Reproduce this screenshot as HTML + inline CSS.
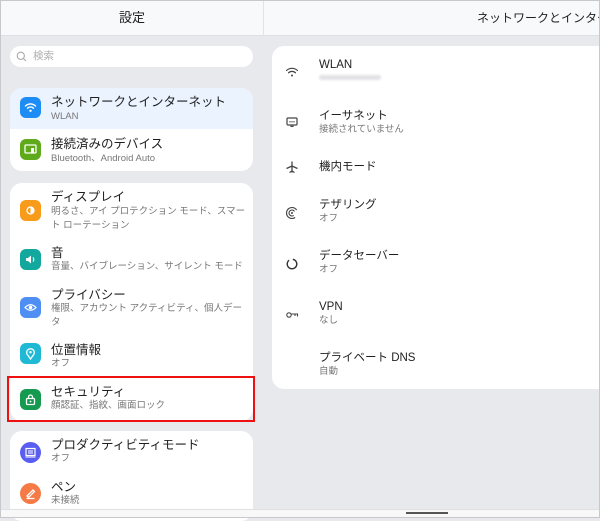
<!DOCTYPE html>
<html><head><meta charset="utf-8"><style>
*{margin:0;padding:0;box-sizing:border-box}
body{width:600px;height:518px;overflow:hidden;background:#e8e9ed;font-family:"Liberation Sans","Noto Sans CJK JP",sans-serif;position:relative;color:#222}
.a{position:absolute}
.hdr{left:0;top:0;width:600px;height:36px;background:#f8f9fa;border-bottom:1px solid #dfe0e3}
.t{position:absolute;font-size:12.5px;line-height:16px;color:#1f1f1f;white-space:nowrap}
.s{position:absolute;font-size:9.5px;color:#777;white-space:nowrap;line-height:14px}
.card{position:absolute;background:#fff;border-radius:12px;overflow:hidden}
.ic{position:absolute;left:20px;width:21px;height:21px;border-radius:6px}
.ri{position:absolute;left:285px;width:14px;height:14px}
</style></head><body>
<div class="a hdr"></div>
<div class="a" style="left:263px;top:0;width:1px;height:36px;background:#e2e3e6"></div>
<div class="t" style="left:119px;top:10px;font-size:13px">設定</div>
<div class="t" style="left:477px;top:10px;font-size:12px">ネットワークとインター</div>
<!-- search -->
<div class="a" style="left:10px;top:46px;width:243px;height:21px;background:#fff;border-radius:11px"></div>
<svg class="a" style="left:16px;top:51px" width="11" height="11" viewBox="0 0 11 11"><circle cx="4.8" cy="4.8" r="3.6" fill="none" stroke="#aaa" stroke-width="1.1"/><path d="M7.5 7.5L10 10" stroke="#aaa" stroke-width="1.1"/></svg>
<div class="s" style="left:33px;top:49px;font-size:10.5px;color:#b0b0b0">検索</div>
<!-- card1 -->
<div class="card" style="left:10px;top:88px;width:243px;height:83px"><div style="height:41px;background:#eaf3fe"></div></div>
<div class="ic" style="top:97px;background:#1e8cf5"></div>
<svg class="a" style="left:24px;top:101px" width="13" height="13" viewBox="0 0 13 13"><path d="M1.5 5a7 7 0 0 1 10 0M3.5 7.2a4.2 4.2 0 0 1 6 0" fill="none" stroke="#fff" stroke-width="1.4" stroke-linecap="round"/><circle cx="6.5" cy="9.8" r="1.2" fill="#fff"/></svg>
<div class="t" style="left:51px;top:94px">ネットワークとインターネット</div>
<div class="s" style="left:51px;top:110px">WLAN</div>
<div class="ic" style="top:139px;background:#5faa1a"></div>
<svg class="a" style="left:24px;top:143px" width="13" height="13" viewBox="0 0 13 13"><rect x="1" y="2" width="11" height="8" rx="1" fill="none" stroke="#fff" stroke-width="1.3"/><rect x="7" y="5" width="3" height="5" fill="#fff"/></svg>
<div class="t" style="left:51px;top:136px">接続済みのデバイス</div>
<div class="s" style="left:51px;top:152px">Bluetooth、Android Auto</div>
<!-- card2 -->
<div class="card" style="left:10px;top:183px;width:243px;height:238px"></div>
<div class="ic" style="top:200px;background:#f89a1a"></div>
<svg class="a" style="left:24px;top:204px" width="13" height="13" viewBox="0 0 13 13"><circle cx="6.5" cy="6.5" r="3.5" fill="none" stroke="#fff" stroke-width="1.3"/><path d="M6.5 3a3.5 3.5 0 0 1 0 7z" fill="#fff"/></svg>
<div class="t" style="left:51px;top:189px">ディスプレイ</div>
<div class="s" style="left:51px;top:205px">明るさ、アイ プロテクション モード、スマー</div>
<div class="s" style="left:51px;top:219px">ト ローテーション</div>
<div class="ic" style="top:249px;background:#13a89e"></div>
<svg class="a" style="left:24px;top:253px" width="13" height="13" viewBox="0 0 13 13"><path d="M2 5h2l3-2.5v8L4 8H2z" fill="#fff"/><path d="M9 4.5a3 3 0 0 1 0 4" fill="none" stroke="#fff" stroke-width="1.2"/></svg>
<div class="t" style="left:51px;top:245px">音</div>
<div class="s" style="left:51px;top:260px">音量、バイブレーション、サイレント モード</div>
<div class="ic" style="top:297px;background:#4f8ef2"></div>
<svg class="a" style="left:24px;top:301px" width="13" height="13" viewBox="0 0 13 13"><path d="M1 6.5Q6.5 1 12 6.5Q6.5 12 1 6.5z" fill="none" stroke="#fff" stroke-width="1.2"/><circle cx="6.5" cy="6.5" r="1.8" fill="#fff"/></svg>
<div class="t" style="left:51px;top:287px">プライバシー</div>
<div class="s" style="left:51px;top:302px">権限、アカウント アクティビティ、個人デー</div>
<div class="s" style="left:51px;top:316px">タ</div>
<div class="ic" style="top:343px;background:#1fb9d6"></div>
<svg class="a" style="left:24px;top:347px" width="13" height="13" viewBox="0 0 13 13"><path d="M6.5 12L3 7a3.8 3.8 0 1 1 7 0z" fill="none" stroke="#fff" stroke-width="1.3"/><circle cx="6.5" cy="5.2" r="1.2" fill="#fff"/></svg>
<div class="t" style="left:51px;top:342px">位置情報</div>
<div class="s" style="left:51px;top:357px">オフ</div>
<div class="ic" style="top:389px;background:#169a50"></div>
<svg class="a" style="left:24px;top:393px" width="13" height="13" viewBox="0 0 13 13"><rect x="2.5" y="5.5" width="8" height="6" rx="1" fill="none" stroke="#fff" stroke-width="1.3"/><path d="M4.5 5.5V4a2 2 0 0 1 4 0v1.5" fill="none" stroke="#fff" stroke-width="1.3"/><circle cx="6.5" cy="8.5" r="0.9" fill="#fff"/></svg>
<div class="t" style="left:51px;top:384px">セキュリティ</div>
<div class="s" style="left:51px;top:399px">顔認証、指紋、画面ロック</div>
<div class="a" style="left:7px;top:376px;width:248px;height:46px;border:2.5px solid #ee1111"></div>
<!-- card3 -->
<div class="card" style="left:10px;top:431px;width:243px;height:90px"></div>
<div class="ic" style="top:442px;background:#5a5ef0;border-radius:50%"></div>
<svg class="a" style="left:24px;top:446px" width="13" height="13" viewBox="0 0 13 13"><rect x="2" y="2.5" width="9" height="7" fill="none" stroke="#fff" stroke-width="1.2"/><path d="M4 5h5M4 7h5M1.5 11h10" stroke="#fff" stroke-width="1"/></svg>
<div class="t" style="left:51px;top:437px">プロダクティビティモード</div>
<div class="s" style="left:51px;top:452px">オフ</div>
<div class="ic" style="top:483px;background:#f57a45;border-radius:50%"></div>
<svg class="a" style="left:24px;top:487px" width="13" height="13" viewBox="0 0 13 13"><path d="M3 9L9 3l1.5 1.5-6 6z M2.5 11.5h8" fill="none" stroke="#fff" stroke-width="1.3"/></svg>
<div class="t" style="left:51px;top:479px">ペン</div>
<div class="s" style="left:51px;top:494px">未接続</div>
<!-- bottom bar -->
<div class="a" style="left:0;top:509px;width:600px;height:9px;background:#f8f8f9;border-top:1px solid #e0e0e3"></div>
<div class="a" style="left:406px;top:512px;width:42px;height:2px;background:#555"></div>
<!-- right card -->
<div class="card" style="left:272px;top:46px;width:340px;height:343px"></div>
<svg class="ri" style="top:65px" viewBox="0 0 14 14"><path d="M1.5 5.5a8 8 0 0 1 11 0M3.5 7.8a5 5 0 0 1 7 0" fill="none" stroke="#444" stroke-width="1.2" stroke-linecap="round"/><circle cx="7" cy="10.5" r="1" fill="#444"/></svg>
<div class="t" style="left:319px;top:57px;font-size:11.5px">WLAN</div>
<div class="a" style="left:319px;top:75px;width:62px;height:5px;background:#e2e2e6;border-radius:3px;filter:blur(1px)"></div>
<svg class="ri" style="top:115px" viewBox="0 0 14 14"><rect x="2" y="3" width="10" height="7" rx="1" fill="none" stroke="#444" stroke-width="1.2"/><path d="M5 6v1.5M7 6v1.5M9 6v1.5M6 10v1.5h2V10" stroke="#444" stroke-width="1" fill="none"/></svg>
<div class="t" style="left:319px;top:108px;font-size:11.5px">イーサネット</div>
<div class="s" style="left:319px;top:123px">接続されていません</div>
<svg class="ri" style="top:160px" viewBox="0 0 14 14"><path d="M7 1.5v11M1.5 8.5L7 6l5.5 2.5M4.5 12.5L7 11l2.5 1.5" fill="none" stroke="#444" stroke-width="1.3"/></svg>
<div class="t" style="left:319px;top:159px;font-size:11.5px">機内モード</div>
<svg class="ri" style="top:206px" viewBox="0 0 14 14"><circle cx="7" cy="7" r="5.5" fill="none" stroke="#444" stroke-width="1.1" stroke-dasharray="26 9" transform="rotate(55 7 7)"/><circle cx="7" cy="7" r="3" fill="none" stroke="#444" stroke-width="1.1" stroke-dasharray="14 5" transform="rotate(55 7 7)"/><circle cx="7" cy="7" r="1" fill="#444"/></svg>
<div class="t" style="left:319px;top:197px;font-size:11.5px">テザリング</div>
<div class="s" style="left:319px;top:212px">オフ</div>
<svg class="ri" style="top:257px" viewBox="0 0 14 14"><circle cx="7" cy="7" r="4.8" fill="none" stroke="#333" stroke-width="1.4" stroke-dasharray="26 4" transform="rotate(-80 7 7)"/></svg>
<div class="t" style="left:319px;top:248px;font-size:11.5px">データセーバー</div>
<div class="s" style="left:319px;top:263px">オフ</div>
<svg class="ri" style="top:308px" viewBox="0 0 14 14"><circle cx="4" cy="7" r="2.2" fill="none" stroke="#444" stroke-width="1.1"/><path d="M6.2 6h6.3v2.5M10 6v2" fill="none" stroke="#444" stroke-width="1.1"/></svg>
<div class="t" style="left:319px;top:299px;font-size:11.5px">VPN</div>
<div class="s" style="left:319px;top:314px">なし</div>
<div class="t" style="left:319px;top:350px;font-size:11.5px">プライベート DNS</div>
<div class="s" style="left:319px;top:365px">自動</div>
<div class="a" style="left:0;top:0;width:600px;height:518px;border:1px solid #c8c8cc;pointer-events:none"></div>
</body></html>
